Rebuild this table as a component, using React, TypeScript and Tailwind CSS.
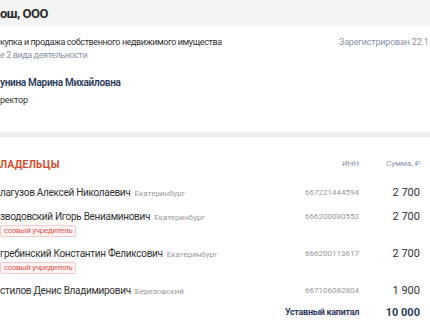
const owners = [
  { name: "лагузов Алексей Николаевич", city: "Екатеринбург", inn: "667221444594", sum: "2 700", mass: false },
  { name: "зводовский Игорь Вениаминович", city: "Екатеринбург", inn: "666200080552", sum: "2 700", mass: true },
  { name: "гребинский Константин Феликсович", city: "Екатеринбург", inn: "666200113617", sum: "2 700", mass: true },
  { name: "стилов Денис Владимирович", city: "Березовский", inn: "667106082804", sum: "1 900", mass: false },
];

const App = () => {
  return (
    <div className="w-[430px] h-[320px] overflow-hidden bg-white text-[#333] font-['Roboto',sans-serif]">
      <div className="h-[26px] bg-[#f4f4f4] flex items-center">
        <h1 className="text-[13px] font-bold leading-none tracking-[-0.5px] text-[#2b2b2b]">ош, ООО</h1>
      </div>

      <div className="pt-[10px] h-[106px]">
        <div className="flex items-start">
          <div className="flex-1 text-[9px] leading-[13px] tracking-[-0.4px]">
            <div>купка и продажа собственного недвижимого имущества</div>
            <div className="text-[#8a93a8]">е 2 вида деятельности</div>
          </div>
          <div className="text-[9px] leading-[13px] tracking-[-0.2px] text-[#8a93a8] whitespace-nowrap w-[91px]">
            Зарегистрирован 22.1
          </div>
        </div>
        <div className="mt-[14px] text-[10px] leading-[14px] font-semibold tracking-[-0.3px] text-[#2d3a5c]">
          унина Марина Михайловна
        </div>
        <div className="mt-[4px] text-[9px] leading-[13px] tracking-[-0.2px]">ректор</div>
      </div>

      <div className="h-[5px] bg-[#ededed]" />

      <div className="pt-[20px] pr-[10px]">
        <div className="flex items-center h-[14px]">
          <div className="flex-1 text-[10px] font-bold tracking-[0.4px] text-[#d9482b]">ЛАДЕЛЬЦЫ</div>
          <div className="w-[80px] text-right text-[8px] text-[#8a93a8]">ИНН</div>
          <div className="w-[61px] text-right text-[8px] text-[#8a93a8]">Сумма, ₽</div>
        </div>

        <div className="mt-[15px] flex flex-col gap-[10px]">
          {owners.map((o, i) => (
            <div key={i} className="flex items-start">
              <div className="flex-1">
                <div className="flex items-baseline gap-[4px] h-[14px]">
                  <span className="text-[10px] leading-[14px] tracking-[-0.3px]">{o.name}</span>
                  <span className="text-[8px] leading-[14px] text-[#999]">{o.city}</span>
                </div>
                {o.mass && (
                  <div className="flex h-[13px] items-end">
                    <span className="px-[3px] text-[8px] leading-[10px] tracking-[-0.3px] text-[#e4574a] bg-[#fff5f5] border border-[#f6c8c8] rounded-[2px]">
                      ссовый учредитель
                    </span>
                  </div>
                )}
              </div>
              <div className="w-[80px] text-right text-[8px] leading-[14px] text-[#999]">{o.inn}</div>
              <div className="w-[61px] text-right text-[11px] leading-[14px]">{o.sum}</div>
            </div>
          ))}
          <div className="flex items-center -mt-[2px] h-[14px] font-bold text-[#2d3a5c]">
            <div className="flex-1 text-right text-[9px] tracking-[-0.3px]">Уставный капитал</div>
            <div className="w-[61px] text-right text-[11px]">10 000</div>
          </div>
        </div>
      </div>
    </div>
  );
};

export default App;
